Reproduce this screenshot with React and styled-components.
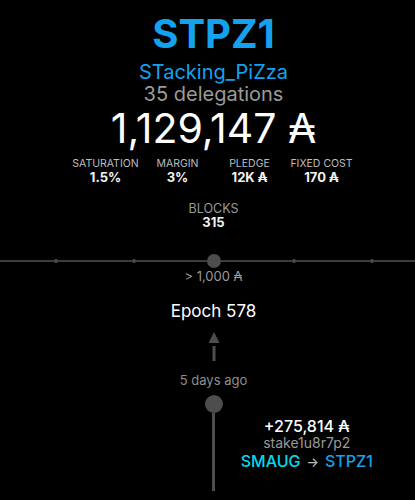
import React from "react";
import styled, { createGlobalStyle } from "styled-components";

const Global = createGlobalStyle`
  html, body { margin: 0; padding: 0; background: #000; }
  body { font-family: Inter, "Noto Sans", "DejaVu Sans", sans-serif; color: #fff; }
`;

const Page = styled.div`
  width: 415px;
  height: 500px;
  overflow: hidden;
  background: #000;
  padding: 10px 0 0 12px;
  box-sizing: border-box;
  display: flex;
  flex-direction: column;
  align-items: center;
  text-align: center;
`;

const Ticker = styled.div`
  font-size: 40px;
  line-height: 48px;
  font-weight: 700;
  color: #14a2ef;
`;

const PoolName = styled.div`
  font-size: 20px;
  line-height: 22px;
  color: #14a2ef;
  margin-top: 3px;
`;

const Delegations = styled.div`
  font-size: 20px;
  line-height: 22px;
  color: #9a9a9a;
`;

const Stake = styled.div`
  font-size: 41px;
  line-height: 48px;
  font-weight: 400;
  color: #fff;
  margin-top: -1px;
`;

const Stats = styled.div`
  display: grid;
  grid-template-columns: repeat(4, 72px);
  margin-top: 6px;
`;

const Stat = styled.div`
  display: flex;
  flex-direction: column;
  align-items: center;
`;

const Label = styled.div`
  font-size: ${p => p.$size || 10.5}px;
  line-height: ${p => p.$lh || 12}px;
  color: ${p => p.$color || "#bdbdbd"};
  text-transform: uppercase;
  white-space: nowrap;
`;

const Value = styled.div`
  font-size: 13px;
  line-height: 15px;
  font-weight: 700;
  color: #f2f2f2;
  white-space: nowrap;
`;

const Blocks = styled(Stat)`
  margin-top: 17px;
`;

const Timeline = styled.div`
  display: flex;
  align-items: center;
  width: 415px;
  margin: 24px 0 0 -12px;
  height: 14px;
`;

const Segment = styled.div`
  height: 2px;
  background: #3c3c3c;
  flex: ${p => (p.$grow ? `1 1 ${p.$basis || 0}px` : `0 0 ${p.$w}px`)};
`;

const Dot = styled.div`
  flex: 0 0 auto;
  width: ${p => p.$d}px;
  height: ${p => p.$d}px;
  border-radius: 50%;
  background: ${p => p.$color || "#4d4d4d"};
`;

const Threshold = styled.div`
  font-size: 13px;
  line-height: 16px;
  color: #9a9a9a;
  margin-top: 0;
`;

const Epoch = styled.div`
  font-size: 17px;
  line-height: 20px;
  color: #fff;
  margin-top: 17px;
`;

const ArrowIcon = styled.svg`
  display: block;
  margin-top: 11px;
`;

const Ago = styled.div`
  font-size: 13px;
  line-height: 16px;
  color: #8e8e8e;
  margin-top: 11px;
`;

const EventRow = styled.div`
  display: grid;
  grid-template-columns: 1fr auto 1fr;
  width: 100%;
  margin-top: 7px;
`;

const Stem = styled.div`
  grid-column: 2;
  display: flex;
  flex-direction: column;
  align-items: center;
`;

const Knob = styled.div`
  width: 18px;
  height: 18px;
  border-radius: 50%;
  background: #4d4d4d;
`;

const Rod = styled.div`
  width: 3px;
  height: 78px;
  background: #4d4d4d;
`;

const EventInfo = styled.div`
  grid-column: 3;
  padding: 22px 24px 0 0;
  display: flex;
  flex-direction: column;
  align-items: center;
`;

const Amount = styled.div`
  font-size: 16px;
  line-height: 18px;
  font-weight: 500;
  color: #fff;
`;

const Address = styled.div`
  font-size: 14px;
  line-height: 16px;
  color: #9a9a9a;
`;

const Move = styled.div`
  font-size: 16px;
  line-height: 18px;
  font-weight: 500;
  margin-top: 1px;
  white-space: nowrap;
`;

const Pool = styled.span`
  color: ${p => p.$color};
`;

const Arrow = styled.span`
  color: #bbb;
  font-size: 13px;
  margin: 0 6px;
`;

const stats = [
  ["Saturation", "1.5%"],
  ["Margin", "3%"],
  ["Pledge", "12K ₳"],
  ["Fixed cost", "170 ₳"],
];

export default function App() {
  return (
    <>
      <Global />
      <Page>
        <Ticker>STPZ1</Ticker>
        <PoolName>STacking_PiZza</PoolName>
        <Delegations>35 delegations</Delegations>
        <Stake>1,129,147 ₳</Stake>
        <Stats>
          {stats.map(([l, v]) => (
            <Stat key={l}>
              <Label>{l}</Label>
              <Value>{v}</Value>
            </Stat>
          ))}
        </Stats>
        <Blocks>
          <Label $size={12.5} $lh={13} $color="#9a9a9a">Blocks</Label>
          <Value>315</Value>
        </Blocks>
        <Timeline>
          <Segment $grow $basis={12} />
          <Dot $d={4} />
          <Segment $w={74} />
          <Dot $d={4} />
          <Segment $w={71} />
          <Dot $d={14} />
          <Segment $w={71} />
          <Dot $d={4} />
          <Segment $w={74} />
          <Dot $d={4} />
          <Segment $grow />
        </Timeline>
        <Threshold>&gt; 1,000 ₳</Threshold>
        <Epoch>Epoch 578</Epoch>
        <ArrowIcon width="12" height="29" viewBox="0 0 12 29">
          <polygon points="6,0 11.5,11 0.5,11" fill="#4d4d4d" />
          <rect x="4.5" y="14" width="3" height="15" fill="#4d4d4d" />
        </ArrowIcon>
        <Ago>5 days ago</Ago>
        <EventRow>
          <Stem>
            <Knob />
            <Rod />
          </Stem>
          <EventInfo>
            <Amount>+275,814 ₳</Amount>
            <Address>stake1u8r7p2</Address>
            <Move>
              <Pool $color="#00dcef">SMAUG</Pool>
              <Arrow>→</Arrow>
              <Pool $color="#14a2ef">STPZ1</Pool>
            </Move>
          </EventInfo>
        </EventRow>
      </Page>
    </>
  );
}
